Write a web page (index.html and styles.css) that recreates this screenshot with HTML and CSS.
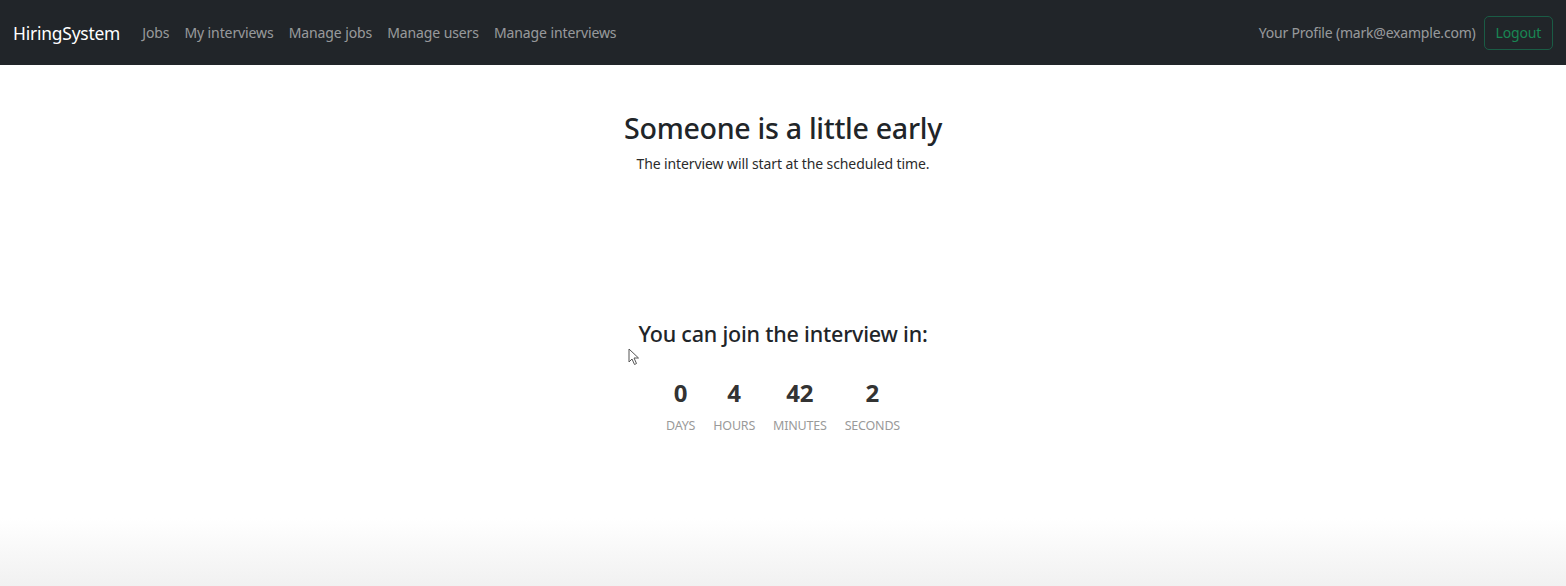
FILE: index.html
```html
<!DOCTYPE html>
<html>
<head>
<meta charset="utf-8">
<link rel="stylesheet" href="styles.css">
</head>
<body>
<nav class="navbar">
  <div class="nav-left">
    <a class="brand">HiringSystem</a>
    <ul class="nav-links">
      <li>Jobs</li>
      <li>My interviews</li>
      <li>Manage jobs</li>
      <li>Manage users</li>
      <li>Manage interviews</li>
    </ul>
  </div>
  <div class="nav-right">
    <span class="profile">Your Profile (mark@example.com)</span>
    <button class="logout">Logout</button>
  </div>
</nav>
<main class="content">
  <section class="intro">
    <h2 class="title">Someone is a little early</h2>
    <p class="subtitle">The interview will start at the scheduled time.</p>
  </section>
  <section class="countdown">
    <h3 class="join">You can join the interview in:</h3>
    <div class="timer">
      <div class="unit"><span class="num">0</span><span class="label">Days</span></div>
      <div class="unit"><span class="num">4</span><span class="label">Hours</span></div>
      <div class="unit"><span class="num">42</span><span class="label">Minutes</span></div>
      <div class="unit"><span class="num">2</span><span class="label">Seconds</span></div>
    </div>
    <svg class="cursor" width="12" height="18" viewBox="0 0 12 18"><path d="M1 1 L1 14 L4 11 L6.5 16.5 L8.5 15.5 L6 10 L10.5 10 Z" fill="#fff" stroke="#555" stroke-width="1"/></svg>
  </section>
</main>
</body>
</html>
```
FILE: styles.css
```css
* { box-sizing: border-box; }
html, body { margin: 0; padding: 0; }
body {
  font-family: "Noto Sans", "Open Sans", sans-serif;
  color: #212529;
  background: linear-gradient(to bottom, #ffffff 0, #ffffff 518px, #f1f1f1 586px);
  min-height: 586px;
  overflow: hidden;
}
.navbar {
  height: 65px;
  background: #212529;
  display: flex;
  align-items: center;
  justify-content: space-between;
  padding: 0 13px 0 13px;
}
.nav-left { display: flex; align-items: center; }
.brand {
  color: #fff;
  font-size: 17.4px;
  margin-right: 22px;
  letter-spacing: -0.2px;
}
.nav-links {
  display: flex;
  list-style: none;
  margin: 0;
  padding: 0;
  gap: 15px;
}
.nav-links li {
  color: rgba(255,255,255,0.55);
  font-size: 14px;
  letter-spacing: -0.1px;
}
.nav-right { display: flex; align-items: center; gap: 8px; }
.profile {
  color: rgba(255,255,255,0.55);
  font-size: 14px;
  letter-spacing: -0.2px;
}
.logout {
  background: transparent;
  border: 1px solid #1a5c45;
  color: #198754;
  font-family: inherit;
  font-size: 14px;
  border-radius: 5px;
  height: 34px;
  padding: 0 11px;
  letter-spacing: -0.2px;
}
.content {
  display: flex;
  flex-direction: column;
  align-items: center;
}
.intro {
  text-align: center;
  padding-top: 44px;
}
.title {
  margin: 0;
  font-size: 28.6px;
  font-weight: 500;
  line-height: 38px;
  letter-spacing: -0.3px;
}
.subtitle {
  margin: 7px 0 0;
  font-size: 14px;
  line-height: 20px;
  letter-spacing: -0.1px;
  color: #2b2b2b;
}
.countdown {
  position: relative;
  text-align: center;
  margin-top: 145px;
}
.join {
  margin: 0;
  font-size: 21.5px;
  font-weight: 500;
  line-height: 30px;
  letter-spacing: -0.2px;
}
.timer {
  display: flex;
  justify-content: center;
  gap: 18px;
  margin-top: 28px;
}
.unit { display: flex; flex-direction: column; align-items: center; }
.num {
  font-size: 24px;
  font-weight: 700;
  line-height: 32px;
  color: #333;
}
.label {
  margin-top: 9px;
  font-size: 12.5px;
  text-transform: uppercase;
  color: #9a9a9a;
  line-height: 16px;
  letter-spacing: -0.2px;
}
.cursor {
  position: absolute;
  left: -10px;
  top: 29px;
}
```
